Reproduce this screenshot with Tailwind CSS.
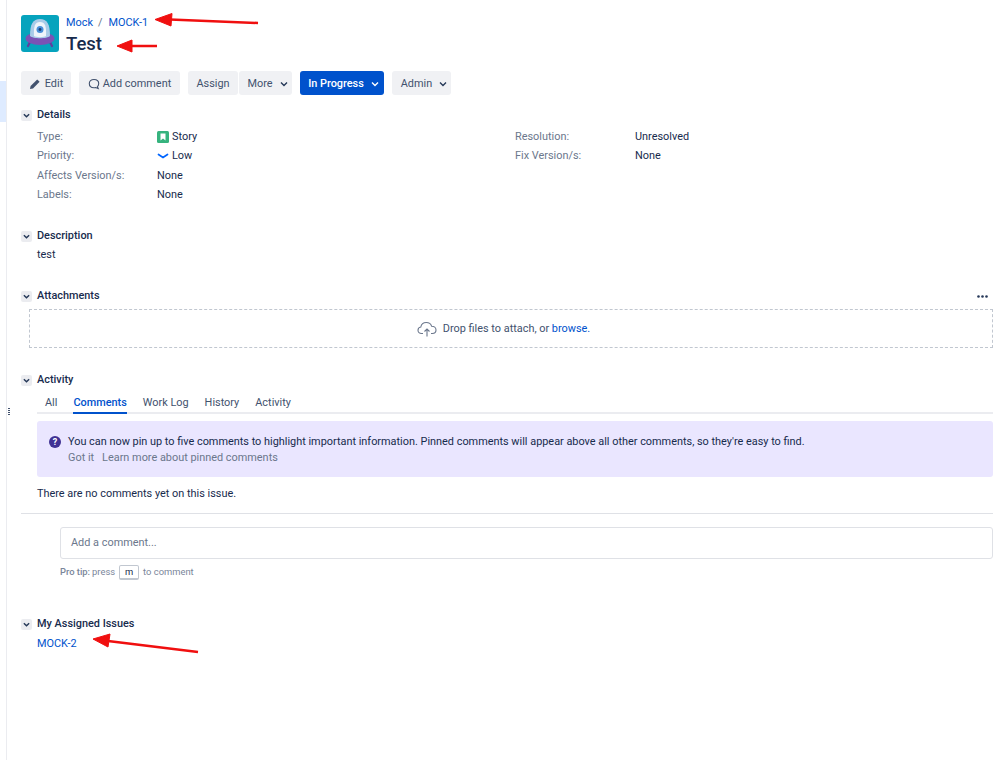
<!DOCTYPE html>
<html lang="en">
<head>
    <meta charset="UTF-8">
    <title>[MOCK-1] Test</title>
    <script src="https://cdn.jsdelivr.net/npm/@tailwindcss/browser@4"></script>
</head>
<body class="relative h-[760px] w-[999px] overflow-hidden bg-white font-['Roboto',sans-serif] text-[10.9px] leading-[16px] text-[#172b4d]">

<div class="flex h-[760px]">
    <!-- collapsed sidebar -->
    <div class="relative w-[7px] shrink-0 border-r border-[#ebecf0]">
        <div class="mt-[81px] h-[41px] w-[6px] bg-[#deebff]"></div>
        <div class="absolute left-[8px] top-[408px] grid grid-cols-2 gap-x-[1px] gap-y-[1px]">
            <span class="h-[1px] w-[1px] bg-[#42526e]"></span><span class="h-[1px] w-[1px] bg-[#42526e]"></span>
            <span class="h-[1px] w-[1px] bg-[#42526e]"></span><span class="h-[1px] w-[1px] bg-[#42526e]"></span>
            <span class="h-[1px] w-[1px] bg-[#42526e]"></span><span class="h-[1px] w-[1px] bg-[#42526e]"></span>
            <span class="h-[1px] w-[1px] bg-[#42526e]"></span><span class="h-[1px] w-[1px] bg-[#42526e]"></span>
        </div>
    </div>

    <main class="w-[986px] pl-[14px] pt-[15px]">
        <!-- header -->
        <div class="flex h-[38px] gap-[7px]">
            <svg class="h-[37px] w-[38px] shrink-0" viewBox="0 0 38 37">
                <rect width="38" height="37" rx="3" fill="#06a3bd"/>
                <path d="M9 27 L7 31 M29 27 L31 31" stroke="#5f3f9e" stroke-width="2.2" stroke-linecap="round"/>
                <ellipse cx="19" cy="23.5" rx="14.5" ry="6.5" fill="#7b52b5"/>
                <path d="M9 21 C9 9 12 4 19 4 C26 4 29 9 29 21 C26 24 12 24 9 21 Z" fill="#a9cbe8"/>
                <path d="M13 21 C12.5 11 14 7 19 7 C24 7 25.5 11 25 21 C23 22.5 15 22.5 13 21 Z" fill="#eef4fa"/>
                <circle cx="19" cy="14.5" r="3.5" fill="#4a90d9"/>
                <circle cx="19" cy="14.5" r="1.4" fill="#1d3f72"/>
            </svg>
            <div>
                <div class="flex h-[16px] items-center text-[#0052cc]">
                    <span>Mock</span><span class="ml-[5px] mr-[6px] text-[#6b778c]">/</span><span>MOCK-1</span>
                </div>
                <h1 class="mt-[1px] text-[18.5px] font-medium leading-[24px]">Test</h1>
            </div>
        </div>

        <!-- toolbar -->
        <div class="mt-[18px] flex h-[24px] text-[#42526e]">
            <button class="flex w-[50px] items-center justify-center gap-[4px] rounded-[3px] bg-[#f0f1f4] pt-px">
                <svg class="h-[12px] w-[12px]" viewBox="0 0 12 12"><path d="M1 11 L1.6 8 L8.2 1.4 L10.6 3.8 L4 10.4 Z" fill="#42526e"/></svg>
                Edit
            </button>
            <button class="ml-[8px] flex w-[101px] items-center justify-center gap-[3px] rounded-[3px] bg-[#f0f1f4] pt-px">
                <svg class="h-[12px] w-[12px]" viewBox="0 0 12 12"><path d="M6 1.5 C9 1.5 10.7 3.4 10.7 5.6 C10.7 7 10.2 8 9.4 8.8 L10.2 10.6 L7.6 9.6 C7.1 9.7 6.6 9.8 6 9.8 C3.2 9.8 1.3 8 1.3 5.6 C1.3 3.4 3 1.5 6 1.5 Z" fill="none" stroke="#42526e" stroke-width="1.1"/></svg>
                Add comment
            </button>
            <button class="ml-[8px] w-[50px] rounded-[3px] bg-[#f0f1f4] pt-px">Assign</button>
            <button class="ml-[1px] flex w-[53px] items-center justify-center gap-[7px] rounded-[3px] bg-[#f0f1f4] pl-[4px] pt-px">
                More
                <svg class="h-[8px] w-[8px]" viewBox="0 0 8 8"><path d="M1 2.5 L4 5.5 L7 2.5" fill="none" stroke="#253858" stroke-width="1.4"/></svg>
            </button>
            <button class="ml-[8px] flex w-[84px] items-center justify-center gap-[7px] rounded-[3px] bg-[#0052cc] pl-[3px] pt-px font-medium text-white">
                In Progress
                <svg class="h-[8px] w-[8px]" viewBox="0 0 8 8"><path d="M1 2.5 L4 5.5 L7 2.5" fill="none" stroke="#ffffff" stroke-width="1.4"/></svg>
            </button>
            <button class="ml-[8px] flex w-[59px] items-center justify-center gap-[7px] rounded-[3px] bg-[#f0f1f4] pl-[5px] pt-px">
                Admin
                <svg class="h-[8px] w-[8px]" viewBox="0 0 8 8"><path d="M1 2.5 L4 5.5 L7 2.5" fill="none" stroke="#253858" stroke-width="1.4"/></svg>
            </button>
        </div>

        <!-- details -->
        <div class="mt-[12px] flex h-[16px] items-center gap-[5px] font-medium">
            <span class="flex h-[11px] w-[11px] items-center justify-center rounded-[2px] bg-[#ebecf0]"><svg class="h-[7px] w-[7px]" viewBox="0 0 8 8"><path d="M1 2.5 L4 5.5 L7 2.5" fill="none" stroke="#253858" stroke-width="1.6"/></svg></span>
            Details
        </div>
        <div class="ml-[16px] mt-[4px] grid grid-cols-[120px_358px_120px_1fr] auto-rows-[19.5px] items-center">
            <span class="text-[#6b778c]">Type:</span>
            <span class="flex items-center gap-[3px]">
                <svg class="h-[12px] w-[12px]" viewBox="0 0 12 12"><rect width="12" height="12" rx="1.5" fill="#36b37e"/><path d="M3.5 2.5 H8.5 V9.5 L6 7.5 L3.5 9.5 Z" fill="#fff"/></svg>
                Story
            </span>
            <span class="text-[#6b778c]">Resolution:</span>
            <span>Unresolved</span>

            <span class="text-[#6b778c]">Priority:</span>
            <span class="flex items-center gap-[3px]">
                <svg class="h-[12px] w-[12px]" viewBox="0 0 12 12"><path d="M1.5 4.5 L6 7.5 L10.5 4.5" fill="none" stroke="#0065ff" stroke-width="1.7" stroke-linecap="round"/></svg>
                Low
            </span>
            <span class="text-[#6b778c]">Fix Version/s:</span>
            <span>None</span>

            <span class="text-[#6b778c]">Affects Version/s:</span>
            <span>None</span>
            <span></span><span></span>

            <span class="text-[#6b778c]">Labels:</span>
            <span>None</span>
            <span></span><span></span>
        </div>

        <!-- description -->
        <div class="mt-[23px] flex h-[16px] items-center gap-[5px] font-medium">
            <span class="flex h-[11px] w-[11px] items-center justify-center rounded-[2px] bg-[#ebecf0]"><svg class="h-[7px] w-[7px]" viewBox="0 0 8 8"><path d="M1 2.5 L4 5.5 L7 2.5" fill="none" stroke="#253858" stroke-width="1.6"/></svg></span>
            Description
        </div>
        <p class="ml-[16px] mt-[3px]">test</p>

        <!-- attachments -->
        <div class="mt-[25px] flex h-[16px] items-center gap-[5px] font-medium">
            <span class="flex h-[11px] w-[11px] items-center justify-center rounded-[2px] bg-[#ebecf0]"><svg class="h-[7px] w-[7px]" viewBox="0 0 8 8"><path d="M1 2.5 L4 5.5 L7 2.5" fill="none" stroke="#253858" stroke-width="1.6"/></svg></span>
            Attachments
            <svg class="ml-auto mr-[5px] h-[3px] w-[11px]" viewBox="0 0 11 3"><circle cx="1.5" cy="1.5" r="1.3" fill="#253858"/><circle cx="5.5" cy="1.5" r="1.3" fill="#253858"/><circle cx="9.5" cy="1.5" r="1.3" fill="#253858"/></svg>
        </div>
        <div class="ml-[8px] mt-[5px] flex h-[39px] items-center justify-center gap-[6px] border border-dashed border-[#c1c7d0] pr-[15px]">
            <svg class="h-[16px] w-[20px]" viewBox="0 0 20 16"><path d="M6 12.5 H4.5 C2.5 12.5 1 11 1 9.2 C1 7.5 2.2 6.2 3.8 6 C4.3 3.4 6.5 1.5 9.3 1.5 C11.8 1.5 13.9 3 14.6 5.2 C17 5.2 19 6.8 19 9 C19 11 17.4 12.5 15.3 12.5 H14 M10 15.5 V8 M7.5 10.5 L10 8 L12.5 10.5" fill="none" stroke="#6b778c" stroke-width="1.1"/></svg>
            <span class="text-[#42526e]">Drop files to attach, or <span class="text-[#0052cc]">browse.</span></span>
        </div>

        <!-- activity -->
        <div class="mt-[24px] flex h-[16px] items-center gap-[5px] font-medium">
            <span class="flex h-[11px] w-[11px] items-center justify-center rounded-[2px] bg-[#ebecf0]"><svg class="h-[7px] w-[7px]" viewBox="0 0 8 8"><path d="M1 2.5 L4 5.5 L7 2.5" fill="none" stroke="#253858" stroke-width="1.6"/></svg></span>
            Activity
        </div>
        <div class="ml-[16px] mt-[5px] flex h-[21px] gap-[16px] border-b-2 border-[#ebecf0] pl-[8px] text-[#42526e]">
            <span class="pt-[2px]">All</span>
            <span class="-mb-[2px] border-b-2 border-[#0052cc] pt-[2px] font-medium text-[#0052cc]">Comments</span>
            <span class="pt-[2px]">Work Log</span>
            <span class="pt-[2px]">History</span>
            <span class="pt-[2px]">Activity</span>
        </div>

        <div class="ml-[16px] mt-[7px] flex h-[56px] gap-[7px] rounded-[3px] bg-[#eae6ff] pl-[12px] pt-[13px]">
            <svg class="mt-[2px] h-[12px] w-[12px]" viewBox="0 0 12 12"><circle cx="6" cy="6" r="6" fill="#403294"/><text x="6" y="9.2" text-anchor="middle" font-size="9" font-weight="700" fill="#fff" font-family="Roboto, sans-serif">?</text></svg>
            <div>
                <p>You can now pin up to five comments to highlight important information. Pinned comments will appear above all other comments, so they're easy to find.</p>
                <p class="text-[#6b778c]"><span>Got it</span><span class="ml-[8px]">Learn more about pinned comments</span></p>
            </div>
        </div>
        <p class="ml-[16px] mt-[9px]">There are no comments yet on this issue.</p>
        <div class="mt-[11px] h-[1px] bg-[#dfe1e6]"></div>

        <!-- comment box -->
        <div class="ml-[39px] mt-[13px] flex h-[32px] items-center rounded-[3px] border border-[#dfe1e6] pl-[10px] text-[#6b778c]">Add a comment...</div>
        <p class="ml-[39px] mt-[5px] flex h-[16px] items-center text-[9.4px] text-[#7a869a]">
            <span class="font-medium">Pro tip:</span>
            <span class="ml-[2px]">press</span>
            <span class="mx-[4px] flex h-[15px] w-[20px] items-center justify-center rounded-[2px] border border-b-2 border-[#c1c7d0] text-[#172b4d]">m</span>
            <span>to comment</span>
        </p>

        <!-- my assigned issues -->
        <div class="mt-[36px] flex h-[16px] items-center gap-[5px] font-medium">
            <span class="flex h-[11px] w-[11px] items-center justify-center rounded-[2px] bg-[#ebecf0]"><svg class="h-[7px] w-[7px]" viewBox="0 0 8 8"><path d="M1 2.5 L4 5.5 L7 2.5" fill="none" stroke="#253858" stroke-width="1.6"/></svg></span>
            My Assigned Issues
        </div>
        <p class="ml-[16px] mt-[4px] text-[#0052cc]">MOCK-2</p>
    </main>
</div>

<!-- red annotation arrows drawn over the screenshot -->
<svg class="pointer-events-none absolute left-0 top-0" width="999" height="760" viewBox="0 0 999 760">
    <g fill="#f00f0f" stroke="#f00f0f">
        <path d="M258 23 L170 19.5" stroke-width="2.5" fill="none"/><path d="M155 19.5 L172 13.5 L171 26 Z" stroke-width="1"/>
        <path d="M157 46 L130 46" stroke-width="2.5" fill="none"/><path d="M117 46 L132 40 L132 52 Z" stroke-width="1"/>
        <path d="M198 652 L108 641" stroke-width="2.5" fill="none"/><path d="M93 639 L110 634 L108 647 Z" stroke-width="1"/>
    </g>
</svg>
</body>
</html>
